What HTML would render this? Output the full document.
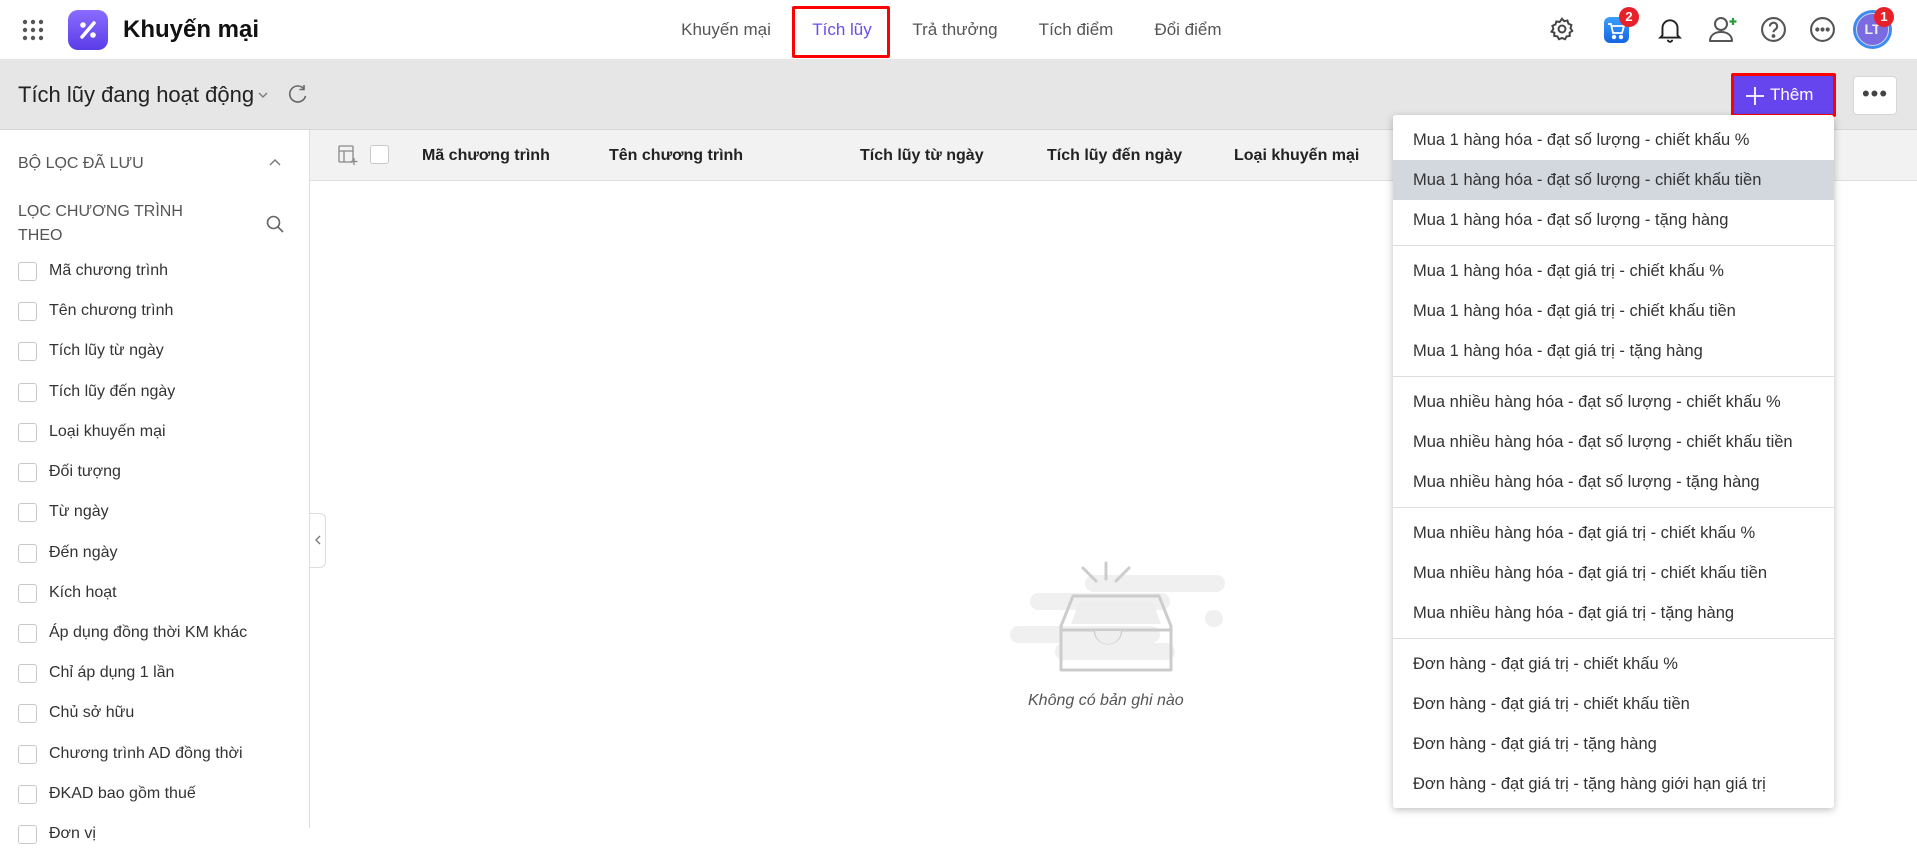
<!DOCTYPE html>
<html><head><meta charset="utf-8"><style>
*{box-sizing:border-box;margin:0;padding:0}
body{width:1917px;height:828px;overflow:hidden;font-family:"Liberation Sans",sans-serif;background:#fff;color:#222;position:relative}
.abs{position:absolute}
.hdr{left:0;top:0;width:1917px;height:59px;background:#fff}
.nav{top:0;height:59px;line-height:59px;font-size:17px;color:#555;transform:translateX(-50%)}
.tb{left:0;top:59px;width:1917px;height:71px;background:#e6e6e6;border-bottom:1px solid #d6d6d6}
.side{left:0;top:130px;width:310px;height:698px;border-right:1px solid #ddd;background:#fff}
.th{left:310px;top:130px;width:1607px;height:51px;background:#f2f2f2;border-bottom:1px solid #ddd}
.thc{top:130px;height:51px;line-height:51px;font-weight:bold;font-size:16px;color:#222}
.cb{width:19px;height:19px;border:1px solid #c8c8c8;border-radius:3px;background:#fff}
.fi{left:18px;height:40px;display:flex;align-items:center;font-size:16px;color:#333}
.fi .cb{margin-right:12px}
.dd{left:1393px;top:115px;width:441px;height:693px;background:#fff;box-shadow:0 2px 8px rgba(0,0,0,.25);border-radius:3px;padding-top:5px}
.it{height:40px;line-height:40px;padding-left:20px;font-size:16.5px;color:#333;white-space:pre}
.sep{height:1px;background:#ddd;margin:5px 0}
</style></head><body>
<div class="abs hdr"></div>
<svg class="abs" style="left:22px;top:19px" width="22" height="22" viewBox="0 0 22 22" fill="#555"><circle cx="3" cy="3" r="2.2"/><circle cx="11" cy="3" r="2.2"/><circle cx="19" cy="3" r="2.2"/><circle cx="3" cy="11" r="2.2"/><circle cx="11" cy="11" r="2.2"/><circle cx="19" cy="11" r="2.2"/><circle cx="3" cy="19" r="2.2"/><circle cx="11" cy="19" r="2.2"/><circle cx="19" cy="19" r="2.2"/></svg>
<div class="abs" style="left:68px;top:10px;width:40px;height:40px;border-radius:10px;background:linear-gradient(#8a6cff,#5b3de8)"></div>
<svg class="abs" style="left:68px;top:10px" width="40" height="40" viewBox="0 0 40 40"><line x1="14" y1="27" x2="26" y2="13" stroke="#fff" stroke-width="3.5" stroke-linecap="round"/><circle cx="15" cy="15" r="2.8" fill="#fff"/><circle cx="25" cy="25" r="2.8" fill="#fff"/></svg>
<div class="abs" style="left:123px;top:16px;font-size:24px;font-weight:bold;color:#111">Khuyến mại</div>
<div class="abs nav" style="left:726px">Khuyến mại</div>
<div class="abs nav" style="left:842px;color:#6a4cf0">Tích lũy</div>
<div class="abs" style="left:792px;top:6px;width:98px;height:52px;border:3px solid #f00;border-radius:2px"></div>
<div class="abs nav" style="left:955px">Trả thưởng</div>
<div class="abs nav" style="left:1076px">Tích điểm</div>
<div class="abs nav" style="left:1188px">Đổi điểm</div>
<svg class="abs" style="left:1549px;top:16px" width="26" height="26" viewBox="0 0 24 24" fill="none" stroke="#444" stroke-width="1.8"><circle cx="12" cy="12" r="3.2"/><path d="M12 2.5l2 2.3 3-.6.9 2.9 2.8 1.2-.9 2.9 1.7 2.5-2.5 1.7.2 3-3 .4-1.4 2.7-2.8-1.2-2.8 1.2-1.4-2.7-3-.4.2-3L2.3 14.5 4 12l-.9-2.9L5.9 7.9l.9-2.9 3 .6z"/></svg>
<div class="abs" style="left:1604px;top:17px;width:25px;height:26px;border-radius:6px;background:linear-gradient(#3aa0ff,#1565e0)"></div>
<svg class="abs" style="left:1606px;top:20px" width="21" height="21" viewBox="0 0 21 21" fill="none" stroke="#fff" stroke-width="1.8"><path d="M2 4h3l2 9h9l2-7H6"/><circle cx="8" cy="17" r="1.3" fill="#fff"/><circle cx="15" cy="17" r="1.3" fill="#fff"/></svg>
<div class="abs" style="left:1619px;top:7px;width:20px;height:20px;border-radius:50%;background:#e8202a;color:#fff;font-size:13px;font-weight:bold;text-align:center;line-height:20px">2</div>
<svg class="abs" style="left:1657px;top:16px" width="26" height="28" viewBox="0 0 24 26" fill="none" stroke="#222" stroke-width="1.8"><path d="M5 18V11a7 7 0 0114 0v7l2 2H3z"/><path d="M10 22a2 2 0 004 0"/></svg>
<svg class="abs" style="left:1708px;top:14px" width="32" height="30" viewBox="0 0 32 30" fill="none" stroke="#555" stroke-width="2"><circle cx="13" cy="10" r="6"/><path d="M2 27c0-6 5-9 11-9s11 3 11 9z" stroke-linejoin="round"/><path d="M25 4v7M21.5 7.5h7" stroke="#2a9d3a" stroke-width="2.2"/></svg>
<svg class="abs" style="left:1760px;top:16px" width="27" height="27" viewBox="0 0 26 26" fill="none" stroke="#555" stroke-width="2"><circle cx="13" cy="13" r="11"/><path d="M9.5 10a3.5 3.5 0 116 2.4c-1.3 1-2.5 1.5-2.5 3.3"/><circle cx="13" cy="19.3" r=".8" fill="#555"/></svg>
<svg class="abs" style="left:1809px;top:16px" width="27" height="27" viewBox="0 0 26 26" fill="none" stroke="#555" stroke-width="2"><circle cx="13" cy="13" r="11"/><circle cx="8" cy="13" r="1" fill="#555"/><circle cx="13" cy="13" r="1" fill="#555"/><circle cx="18" cy="13" r="1" fill="#555"/></svg>
<div class="abs" style="left:1853px;top:10px;width:39px;height:39px;border-radius:50%;background:#3d8bf0;padding:3px"><div style="width:33px;height:33px;border-radius:50%;background:#7a6be0;border:1.5px solid #cfd8ff;color:#eee;font-size:14px;font-weight:bold;text-align:center;line-height:30px">LT</div></div>
<div class="abs" style="left:1874px;top:7px;width:20px;height:20px;border-radius:50%;background:#e8202a;color:#fff;font-size:13px;font-weight:bold;text-align:center;line-height:20px">1</div>

<div class="abs tb"></div>
<div class="abs" style="left:18px;top:82px;font-size:22px;color:#222">Tích lũy đang hoạt động</div>
<svg class="abs" style="left:257px;top:91px" width="12" height="8" viewBox="0 0 12 8" fill="none" stroke="#777" stroke-width="1.3"><path d="M2 2l4 4 4-4"/></svg>
<svg class="abs" style="left:287px;top:83px" width="22" height="22" viewBox="0 0 22 22" fill="none" stroke="#666" stroke-width="1.6"><path d="M17 6a8 8 0 10 1.5 7"/><path d="M17 2v4.5h-4.5"/></svg>
<div class="abs" style="left:1731px;top:73px;width:105px;height:44px;border:3px solid #f00;background:#6644ee;border-radius:2px"></div>
<svg class="abs" style="left:1744px;top:85px" width="22" height="22" viewBox="0 0 22 22" stroke="#fff" stroke-width="1.8"><path d="M11 2v18M2 11h18"/></svg>
<div class="abs" style="left:1770px;top:85px;color:#fff;font-size:17px">Thêm</div>
<div class="abs" style="left:1853px;top:76px;width:44px;height:39px;background:#fff;border:1px solid #d6d6d6;border-radius:4px;text-align:center;line-height:34px;font-size:22px;color:#444;letter-spacing:1px">•••</div>

<div class="abs side"></div>
<div class="abs" style="left:18px;top:155px;font-size:16px;color:#555">BỘ LỌC ĐÃ LƯU</div>
<svg class="abs" style="left:268px;top:157px" width="14" height="10" viewBox="0 0 14 10" fill="none" stroke="#777" stroke-width="1.4"><path d="M2 8l5-5 5 5"/></svg>
<div class="abs" style="left:18px;top:200px;font-size:16px;color:#555;line-height:24px">LỌC CHƯƠNG TRÌNH<br>THEO</div>
<svg class="abs" style="left:265px;top:214px" width="20" height="20" viewBox="0 0 20 20" fill="none" stroke="#666" stroke-width="1.6"><circle cx="8.5" cy="8.5" r="6"/><path d="M13 13l5 5"/></svg>
<div class="abs fi" style="top:251px"><div class="cb"></div>Mã chương trình</div>
<div class="abs fi" style="top:291px"><div class="cb"></div>Tên chương trình</div>
<div class="abs fi" style="top:331px"><div class="cb"></div>Tích lũy từ ngày</div>
<div class="abs fi" style="top:372px"><div class="cb"></div>Tích lũy đến ngày</div>
<div class="abs fi" style="top:412px"><div class="cb"></div>Loại khuyến mại</div>
<div class="abs fi" style="top:452px"><div class="cb"></div>Đối tượng</div>
<div class="abs fi" style="top:492px"><div class="cb"></div>Từ ngày</div>
<div class="abs fi" style="top:533px"><div class="cb"></div>Đến ngày</div>
<div class="abs fi" style="top:573px"><div class="cb"></div>Kích hoạt</div>
<div class="abs fi" style="top:613px"><div class="cb"></div>Áp dụng đồng thời KM khác</div>
<div class="abs fi" style="top:653px"><div class="cb"></div>Chỉ áp dụng 1 lần</div>
<div class="abs fi" style="top:693px"><div class="cb"></div>Chủ sở hữu</div>
<div class="abs fi" style="top:734px"><div class="cb"></div>Chương trình AD đồng thời</div>
<div class="abs fi" style="top:774px"><div class="cb"></div>ĐKAD bao gồm thuế</div>
<div class="abs fi" style="top:814px"><div class="cb"></div>Đơn vị</div>
<div class="abs" style="left:310px;top:513px;width:16px;height:55px;background:#fff;border:1px solid #ddd;border-left:none;border-radius:0 6px 6px 0"></div>
<svg class="abs" style="left:314px;top:534px" width="8" height="12" viewBox="0 0 8 12" fill="none" stroke="#777" stroke-width="1.3"><path d="M6 2L2 6l4 4"/></svg>

<div class="abs th"></div>
<svg class="abs" style="left:337px;top:144px" width="22" height="22" viewBox="0 0 22 22" fill="none" stroke="#888" stroke-width="1.3"><rect x="2" y="2" width="14" height="16" rx="1"/><path d="M2 7h14M7 7v11"/><path d="M17 14v7M13.5 17.5h7"/></svg>
<div class="abs cb" style="left:370px;top:145px"></div>
<div class="abs thc" style="left:422px">Mã chương trình</div>
<div class="abs thc" style="left:609px">Tên chương trình</div>
<div class="abs thc" style="left:860px">Tích lũy từ ngày</div>
<div class="abs thc" style="left:1047px">Tích lũy đến ngày</div>
<div class="abs thc" style="left:1234px">Loại khuyến mại</div>

<svg class="abs" style="left:1005px;top:558px" width="220" height="120" viewBox="0 0 220 120"><g fill="#f0f0f0"><rect x="80" y="17" width="140" height="17" rx="8.5"/><rect x="25" y="35" width="140" height="17" rx="8.5"/><rect x="200" y="52" width="18" height="17" rx="8.5"/><rect x="5" y="68" width="150" height="17" rx="8.5"/><rect x="50" y="85" width="120" height="17" rx="8.5"/></g><g stroke="#ccc" stroke-width="3" fill="none" stroke-linecap="round"><path d="M78 10l13 13M101 5v16M124 10l-13 13"/><path d="M56 112V68l12-30h86l12 30v44z" stroke-linejoin="round"/><path d="M56 72h110"/><path d="M90 72a13 13 0 0026 0"/></g><path d="M66 66l8-22h74l8 22z" fill="#eee"/><path d="M90 73a13 13 0 0026 0z" fill="#eee"/></svg>
<div class="abs" style="left:1028px;top:692px;font-size:16px;font-style:italic;color:#555">Không có bản ghi nào</div>

<div class="abs dd">
<div class="it">Mua 1 hàng hóa - đạt số lượng - chiết khấu %</div>
<div class="it" style="background:#d3d7de">Mua 1 hàng hóa - đạt số lượng - chiết khấu tiền</div>
<div class="it">Mua 1 hàng hóa - đạt số lượng - tặng hàng</div>
<div class="sep"></div>
<div class="it">Mua 1 hàng hóa - đạt giá trị - chiết khấu %</div>
<div class="it">Mua 1 hàng hóa - đạt giá trị - chiết khấu tiền</div>
<div class="it">Mua 1 hàng hóa - đạt giá trị - tặng hàng</div>
<div class="sep"></div>
<div class="it">Mua nhiều hàng hóa - đạt số lượng - chiết khấu %</div>
<div class="it">Mua nhiều hàng hóa - đạt số lượng - chiết khấu tiền</div>
<div class="it">Mua nhiều hàng hóa - đạt số lượng - tặng hàng</div>
<div class="sep"></div>
<div class="it">Mua nhiều hàng hóa - đạt giá trị - chiết khấu %</div>
<div class="it">Mua nhiều hàng hóa - đạt giá trị - chiết khấu tiền</div>
<div class="it">Mua nhiều hàng hóa - đạt giá trị - tặng hàng</div>
<div class="sep"></div>
<div class="it">Đơn hàng - đạt giá trị - chiết khấu %</div>
<div class="it">Đơn hàng - đạt giá trị - chiết khấu tiền</div>
<div class="it">Đơn hàng - đạt giá trị - tặng hàng</div>
<div class="it">Đơn hàng - đạt giá trị - tặng hàng giới hạn giá trị</div>
</div>
</body></html>
